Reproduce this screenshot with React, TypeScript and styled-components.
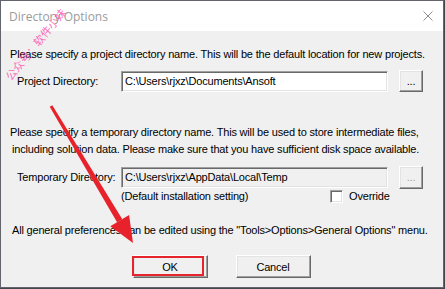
import styled, { createGlobalStyle } from 'styled-components';

const GlobalStyle = createGlobalStyle`
  html, body {
    margin: 0;
    padding: 0;
    background: #43474d;
  }
  body {
    font-family: 'Liberation Sans', Arial, sans-serif;
    font-size: 11px;
    letter-spacing: -0.18px;
    color: #000;
  }
`;

const Window = styled.div`
  position: relative;
  width: 442px;
  height: 286px;
  border: 1px solid #62666c;
  background: #f0f0f0;
  display: flex;
  flex-direction: column;
  overflow: hidden;
`;

const TitleBar = styled.div`
  height: 30px;
  flex: none;
  background: #fff;
  display: flex;
  align-items: center;
  justify-content: space-between;
  padding: 0 10px 0 8px;
`;

const Title = styled.span`
  font-family: 'Open Sans', 'Noto Sans', sans-serif;
  font-size: 12px;
  letter-spacing: 0;
  color: #9b9b9b;
`;

const CloseIcon = styled.svg`
  width: 10px;
  height: 10px;
  margin-top: -1px;
`;

const Client = styled.div`
  flex: 1;
  display: flex;
  flex-direction: column;
  padding: 0 9px;
`;

const Line = styled.div<{ $indent?: number; $mt?: number }>`
  line-height: 17px;
  white-space: nowrap;
  padding-left: ${(p) => p.$indent ?? 0}px;
  margin-top: ${(p) => p.$mt ?? 0}px;
`;

const FieldRow = styled.div<{ $mt: number }>`
  display: flex;
  align-items: center;
  height: 22px;
  margin-top: ${(p) => p.$mt}px;
  padding-left: 7px;
`;

const Label = styled.span`
  width: 104px;
  line-height: 17px;
  white-space: nowrap;
`;

const PathBox = styled.div<{ $disabled?: boolean }>`
  box-sizing: border-box;
  width: 267px;
  height: 21px;
  padding: 2px 0 0 3px;
  line-height: 15px;
  white-space: nowrap;
  background: ${(p) => (p.$disabled ? '#f0f0f0' : '#fff')};
  border: 1px solid;
  border-color: #a0a0a0 #ffffff #ffffff #a0a0a0;
  box-shadow: inset 1px 1px 0 #696969, inset -1px -1px 0 #e3e3e3;
`;

const ClassicButton = styled.button<{ $w: number; $h: number; $disabled?: boolean }>`
  box-sizing: border-box;
  width: ${(p) => p.$w}px;
  height: ${(p) => p.$h}px;
  padding: 0;
  font-family: 'Liberation Sans', Arial, sans-serif;
  font-size: 11px;
  letter-spacing: -0.18px;
  color: ${(p) => (p.$disabled ? '#a0a0a0' : '#000')};
  background: #f0f0f0;
  border: 1px solid;
  border-color: #ffffff #696969 #696969 #ffffff;
  box-shadow: inset -1px -1px 0 #a0a0a0, inset 1px 1px 0 #e3e3e3;
`;

const BrowseButton = styled(ClassicButton)`
  margin-left: 11px;
  line-height: 12px;
`;

const SubRow = styled.div`
  display: grid;
  grid-template-columns: 209px auto;
  align-items: center;
  height: 14px;
  padding-left: 111px;
  line-height: 14px;
`;

const CheckLabel = styled.label`
  display: flex;
  align-items: center;
  gap: 6px;
  margin-top: 1px;
`;

const CheckBox = styled.span`
  box-sizing: border-box;
  width: 13px;
  height: 13px;
  background: #fff;
  border: 1px solid;
  border-color: #a0a0a0 #ffffff #ffffff #a0a0a0;
  box-shadow: inset 1px 1px 0 #696969, inset -1px -1px 0 #e3e3e3;
`;

const ButtonRow = styled.div`
  display: flex;
  justify-content: center;
  gap: 28px;
  margin-top: 16px;
  padding-right: 1px;
`;

const Highlighted = styled.div`
  position: relative;
`;

const RedFrame = styled.span`
  position: absolute;
  left: -1px;
  top: 1px;
  width: 72px;
  height: 20px;
  box-sizing: border-box;
  border: 2px solid #e5242c;
  pointer-events: none;
`;

const Watermark = styled.span`
  position: absolute;
  left: -14px;
  top: 37px;
  width: 96px;
  text-align: center;
  font-family: 'Noto Sans CJK SC', sans-serif;
  font-size: 11px;
  line-height: 12px;
  letter-spacing: 0;
  color: rgba(255, 70, 170, 0.8);
  transform: rotate(-51deg);
  pointer-events: none;
  white-space: nowrap;
`;

const ArrowLayer = styled.svg`
  position: absolute;
  left: -1px;
  top: -1px;
  width: 444px;
  height: 288px;
  pointer-events: none;
`;

const App = () => {
  return (
    <>
      <GlobalStyle />
      <Window>
        <TitleBar>
          <Title>Directory Options</Title>
          <CloseIcon viewBox='0 0 10 10'>
            <path d='M0.5 0.5 L9.5 9.5 M9.5 0.5 L0.5 9.5' stroke='#8a8a8a' strokeWidth='1' fill='none' />
          </CloseIcon>
        </TitleBar>
        <Client>
          <Line $mt={15}>Please specify a project directory name. This will be the default location for new projects.</Line>
          <FieldRow $mt={7}>
            <Label>Project Directory:</Label>
            <PathBox>C:\Users\rjxz\Documents\Ansoft</PathBox>
            <BrowseButton $w={24} $h={22}>...</BrowseButton>
          </FieldRow>

          <Line $mt={32}>
            Please specify a temporary directory name. This will be used to store intermediate files,
          </Line>
          <Line $indent={2}>including solution data. Please make sure that you have sufficient disk space available.</Line>
          <FieldRow $mt={8}>
            <Label>Temporary Directory:</Label>
            <PathBox $disabled>C:\Users\rjxz\AppData\Local\Temp</PathBox>
            <BrowseButton $w={24} $h={23} $disabled>...</BrowseButton>
          </FieldRow>
          <SubRow>
            <span>(Default installation setting)</span>
            <CheckLabel>
              <CheckBox />
              Override
            </CheckLabel>
          </SubRow>

          <Line $indent={2} $mt={20}>
            All general preferences can be edited using the "Tools&gt;Options&gt;General Options" menu.
          </Line>

          <ButtonRow>
            <Highlighted>
              <ClassicButton $w={75} $h={23}>OK</ClassicButton>
              <RedFrame />
            </Highlighted>
            <ClassicButton $w={75} $h={23}>Cancel</ClassicButton>
          </ButtonRow>
        </Client>

        <Watermark>公众号：软件小妹</Watermark>
        <ArrowLayer viewBox='0 0 444 288'>
          <polygon points='52.3,105.2 49.7,106.8 117.1,222.2 122.3,219.2' fill='#e8222b' />
          <polygon points='129.1,215.1 110.3,226.3 133,243' fill='#e8222b' />
        </ArrowLayer>
      </Window>
    </>
  );
};

export default App;
